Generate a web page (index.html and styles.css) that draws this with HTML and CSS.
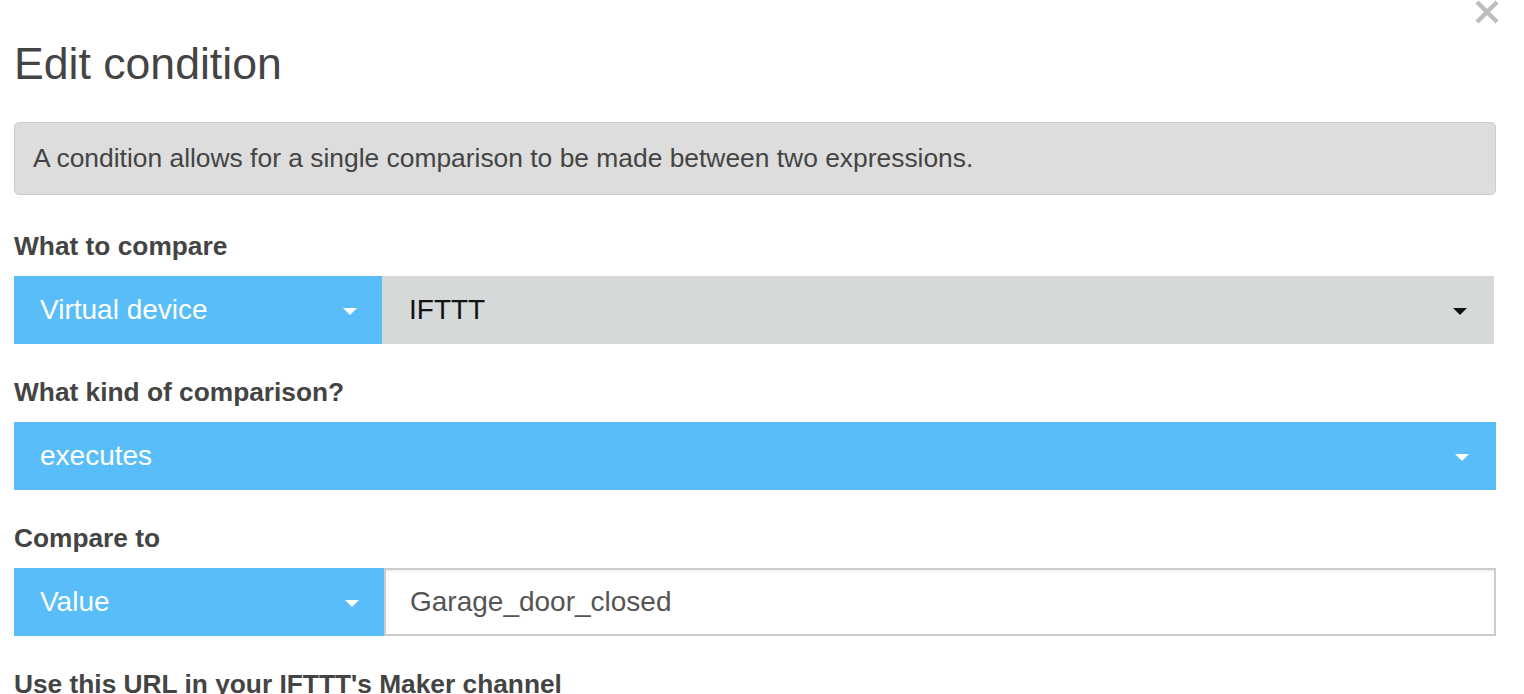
FILE: index.html
```html
<!DOCTYPE html>
<html lang="en">
<head>
    <meta charset="UTF-8">
    <meta name="viewport" content="width=device-width, initial-scale=1.0">
    <title>Edit condition</title>
    <link rel="stylesheet" href="styles.css">
</head>
<body>
    <div class="modal">
        <span class="close-btn">
            <svg width="26" height="26" viewBox="0 0 26 26">
                <path d="M3 3 L23 23 M23 3 L3 23" stroke="#bdbdbd" stroke-width="4.5" fill="none"/>
            </svg>
        </span>

        <h1 class="title">Edit condition</h1>

        <div class="well">A condition allows for a single comparison to be made between two expressions.</div>

        <div class="group">
            <label class="group-label">What to compare</label>
            <div class="row row-short">
                <div class="picker picker-blue picker-left">
                    <span>Virtual device</span>
                    <span class="caret caret-white"></span>
                </div>
                <div class="picker picker-gray picker-fill">
                    <span>IFTTT</span>
                    <span class="caret caret-black"></span>
                </div>
            </div>
        </div>

        <div class="group">
            <label class="group-label">What kind of comparison?</label>
            <div class="row">
                <div class="picker picker-blue picker-fill">
                    <span>executes</span>
                    <span class="caret caret-white"></span>
                </div>
            </div>
        </div>

        <div class="group">
            <label class="group-label">Compare to</label>
            <div class="row">
                <div class="picker picker-blue picker-left picker-wide">
                    <span>Value</span>
                    <span class="caret caret-white"></span>
                </div>
                <div class="text-field">Garage_door_closed</div>
            </div>
        </div>

        <div class="group">
            <label class="group-label">Use this URL in your IFTTT's Maker channel</label>
        </div>
    </div>
</body>
</html>
```

FILE: styles.css
```css
body {
    margin: 0;
    padding: 0;
    background-color: #fff;
    font-family: "Liberation Sans", Arial, sans-serif;
    color: #444;
    overflow: hidden;
}

.modal {
    position: relative;
    width: 1482px;
    padding: 40px 28px 0 14px;
}

.close-btn {
    position: absolute;
    top: -1px;
    right: 24px;
    width: 26px;
    height: 26px;
}
.close-btn svg {
    display: block;
}

.title {
    margin: 0;
    font-size: 44.6px;
    line-height: 48px;
    font-weight: normal;
    color: #444;
}

.well {
    margin-top: 34px;
    height: 71px;
    box-sizing: content-box;
    padding: 0 0 0 18px;
    background-color: #dddddd;
    border: 1px solid #cccccc;
    border-radius: 5px;
    font-size: 26.4px;
    line-height: 71px;
    color: #444;
}

.group {
    margin-top: 36px;
}
.group + .group {
    margin-top: 33px;
}

.group-label {
    display: block;
    font-size: 26.3px;
    line-height: 30px;
    font-weight: bold;
    color: #444;
    margin-bottom: 15px;
}

.row {
    display: flex;
    height: 68px;
}
.row-short {
    margin-right: 2px;
}

.picker {
    display: flex;
    align-items: center;
    justify-content: space-between;
    box-sizing: border-box;
    height: 68px;
    padding: 0 27px 0 26px;
    font-size: 28px;
}
.picker-blue {
    background-color: #58bdf8;
    color: #fff;
}
.picker-gray {
    background-color: #d5d9da;
    color: #111;
    padding-left: 27px;
}
.picker-left {
    width: 368px;
    flex: none;
    padding-right: 25px;
}
.picker-wide {
    width: 370px;
}
.picker-fill {
    flex: 1;
}

.caret {
    width: 0;
    height: 0;
    border-left: 7px solid transparent;
    border-right: 7px solid transparent;
    margin-top: 2px;
}
.caret-white {
    border-top: 7px solid #fff;
}
.caret-black {
    border-top: 7px solid #111;
}

.text-field {
    flex: 1;
    box-sizing: border-box;
    height: 68px;
    border: 2px solid #cccccc;
    box-shadow: inset 0 2px 2px rgba(0, 0, 0, 0.05);
    padding-left: 24px;
    font-size: 28px;
    line-height: 64px;
    color: #555;
}
```
